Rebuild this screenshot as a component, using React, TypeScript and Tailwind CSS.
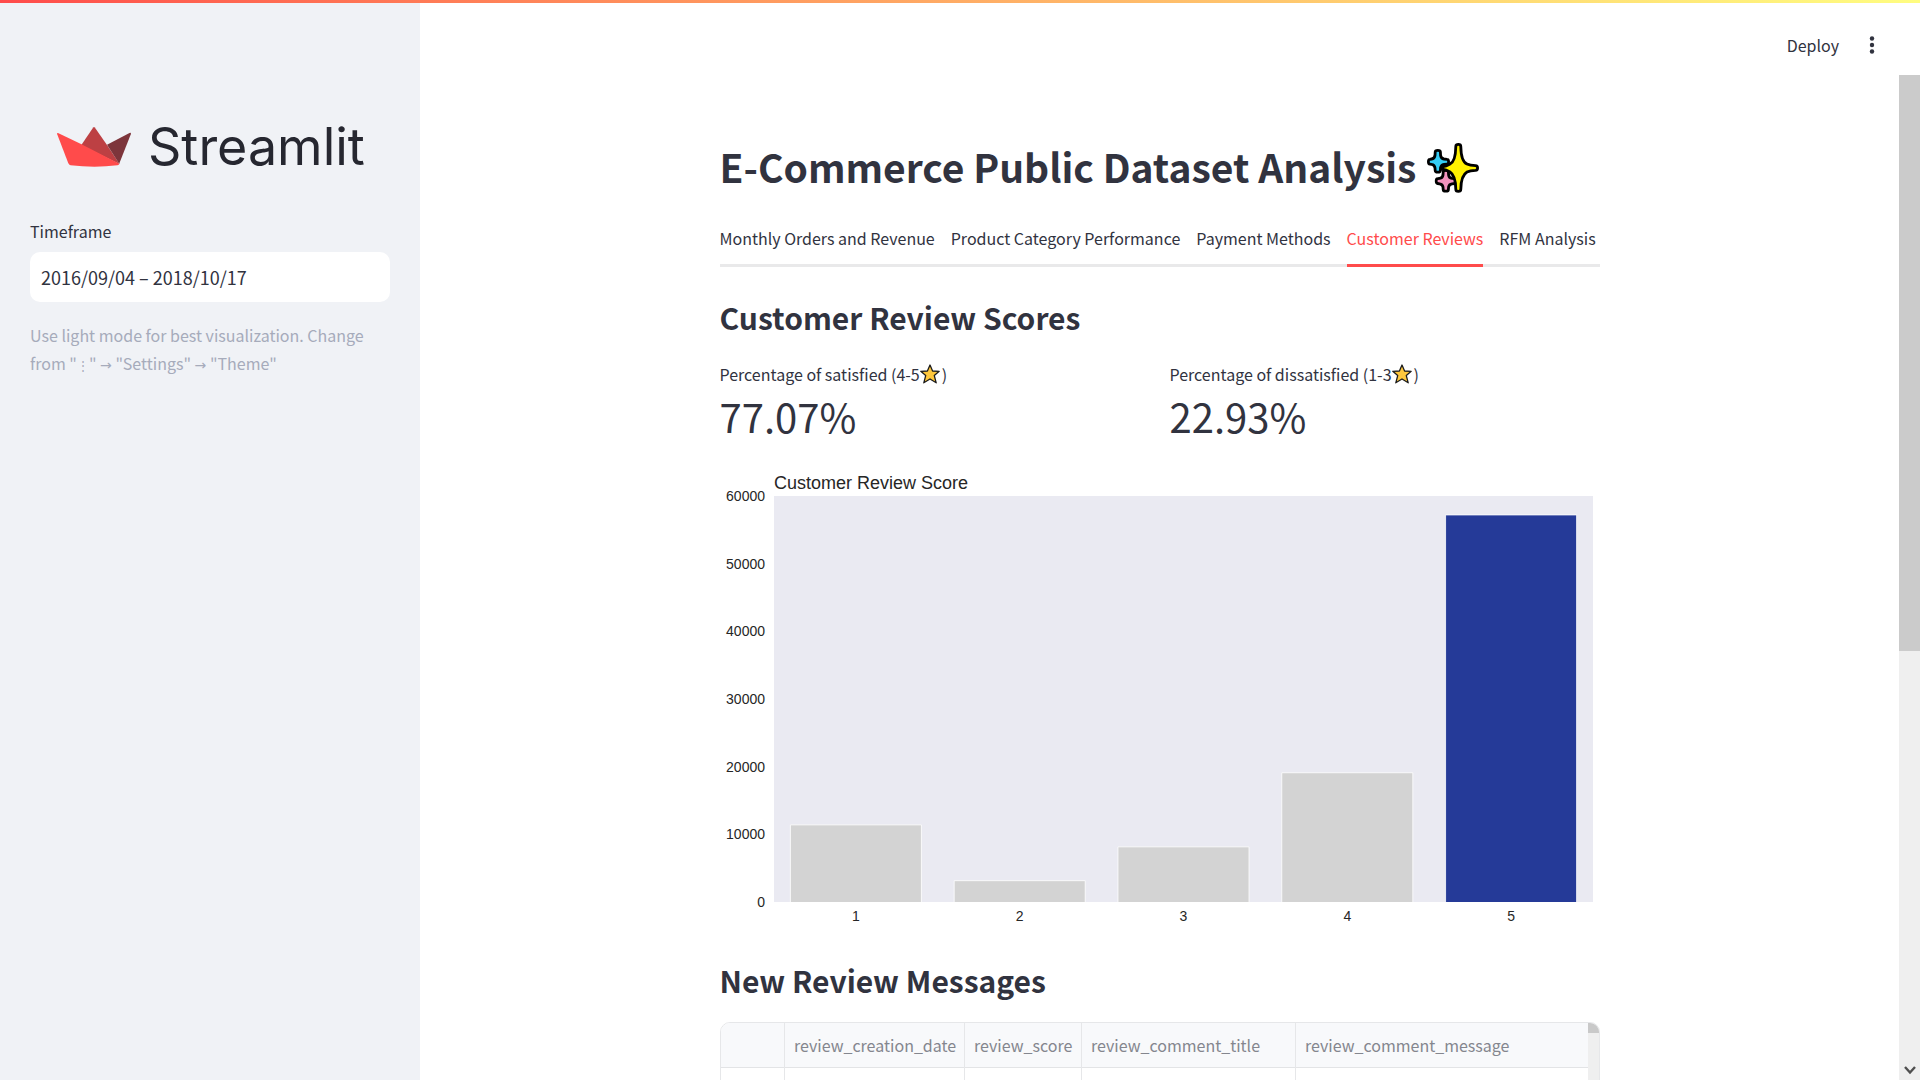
import React from "react";

const tabs = [
  "Monthly Orders and Revenue",
  "Product Category Performance",
  "Payment Methods",
  "Customer Reviews",
  "RFM Analysis",
];

const scores = [
  { score: 1, count: 11400 },
  { score: 2, count: 3150 },
  { score: 3, count: 8150 },
  { score: 4, count: 19100 },
  { score: 5, count: 57200 },
];

const ticks = [0, 10000, 20000, 30000, 40000, 50000, 60000];

function StreamlitMark() {
  return (
    <svg viewBox="0 0 76 42" className="h-[42px] w-[76px]" aria-hidden="true">
      <path d="M25 19.5 L37.2 1.6 Q38 .6 38.8 1.6 L51 19 L63.5 38 Z" fill="#bd4043" />
      <path d="M51 18.8 L73.5 7 Q75.5 6.3 74.8 8.2 L63.2 37.8 Z" fill="#7d353b" />
      <path d="M2 7 Q.6 6.6 1.2 8.3 L12.2 37 Q12.9 38.7 14.5 39.2 Q38 42 61.5 39.3 Q63 39 63.4 37.8 L25.5 18.2 Z" fill="#ff4b4b" />
    </svg>
  );
}

function Sparkles() {
  return (
    <svg viewBox="0 0 52 50" className="mt-1 h-[50px] w-[52px]" role="img" aria-label="sparkles">
      <g stroke="#000" strokeWidth="2.8" strokeLinejoin="round">
        <path d="M8.2 9 Q8.2 7.400 10.800 7.400 Q13.400 7.400 13.400 9 L13.600 12.500 Q14 15.600 17 16 L20 16.300 Q21.600 16.400 21.600 18.700 Q21.600 21 20 21.100 L17 21.400 Q14 21.800 13.600 25 L13.400 27.500 Q13.400 29.200 10.800 29.200 Q8.200 29.200 8.200 27.500 L8 25 Q7.600 21.800 4.600 21.400 L2.800 21.100 Q1.400 21 1.400 18.700 Q1.400 16.400 2.800 16.300 L4.600 16 Q7.600 15.600 8 12.500 Z" fill="#35cdf5" />
        <path d="M16.200 29 Q16.200 27.400 18.800 27.400 Q21.400 27.400 21.400 29 L21.600 32 Q22 35 25 35.400 L28 35.700 Q29.600 35.800 29.600 38.100 Q29.600 40.400 28 40.500 L25 40.800 Q22 41.200 21.600 44 L21.400 46.400 Q21.400 48.200 18.800 48.200 Q16.200 48.200 16.200 46.400 L16 44 Q15.600 41.200 12.600 40.800 L10.600 40.500 Q9.200 40.400 9.200 38.100 Q9.200 35.800 10.600 35.700 L12.600 35.400 Q15.600 35 16 32 Z" fill="#f292bd" />
        <path d="M28.8 3.4 Q28.8 1.4 31.3 1.4 Q33.8 1.4 33.8 3.4 Q34 18.200 40 21 Q43 22.400 48.500 22.600 Q50.600 22.800 50.600 25 Q50.600 27.200 48.500 27.400 Q43 27.600 40 29 Q34 32.500 33.800 46.200 Q33.800 48.400 31.300 48.400 Q28.800 48.400 28.800 46.200 Q28.600 32.500 23 29 Q19.500 26.800 14.500 26 Q13.500 25 14.500 24 Q19.500 23.200 23 21 Q28.600 18.200 28.800 3.400 Z" fill="#fff100" />
      </g>
    </svg>
  );
}

function Star() {
  return (
    <svg viewBox="0 0 20 20" className="mr-[2px] h-5 w-5" role="img" aria-label="star">
      <path d="M10 1 L12.6 7 L19.2 7.3 L14.3 11.6 L16.2 18.8 L10 15 L3.8 18.8 L5.7 11.6 L.8 7.3 L7.4 7 Z" fill="#ffc83d" stroke="#1c1c1c" strokeWidth="1.3" strokeLinejoin="round" />
    </svg>
  );
}

function ScoreChart() {
  const left = 54;
  const top = 26;
  const width = 819;
  const height = 406;
  const bottom = top + height;
  const slot = width / scores.length;
  return (
    <svg viewBox="0 0 880 460" className="w-full font-['Liberation_Sans',sans-serif]" fill="#262626" role="img" aria-label="Customer Review Score">
      <text x={left} y="19" fontSize="18">Customer Review Score</text>
      <rect x={left} y={top} width={width} height={height} fill="#eaeaf2" />
      {ticks.map((t) => (
        <text key={t} x="45" y={bottom - (t / 60000) * height + 5} fontSize="14" textAnchor="end">{t}</text>
      ))}
      {scores.map(({ score, count }, i) => {
        const h = (count / 60000) * height;
        const x = left + slot * i + slot * 0.1;
        return (
          <g key={score}>
            <path d={`M${x} ${bottom} v${-h} h${slot * 0.8} v${h}`} fill={score === 5 ? "#253a98" : "#d3d3d3"} stroke="#fff" strokeOpacity="0.8" />
            <text x={left + slot * (i + 0.5)} y="451" fontSize="14" textAnchor="middle">{score}</text>
          </g>
        );
      })}
    </svg>
  );
}

function Metric({ label, value }: { label: string; value: string }) {
  return (
    <div className="flex-1">
      <div className="flex h-7 items-center text-base">
        <span>{label}</span>
        <Star />
        <span>)</span>
      </div>
      <div className="text-[40px] leading-[56px]">{value}</div>
    </div>
  );
}

function Arrow() {
  return <span className="font-['DejaVu_Sans',sans-serif] text-sm leading-5">→</span>;
}

export default function App() {
  return (
    <div className="flex h-screen flex-col overflow-hidden bg-white font-['Noto_Sans_CJK_SC',sans-serif] text-[#31333f]">
      <div className="flex min-h-0 flex-1">
        <aside className="w-[420px] shrink-0 bg-[#f0f2f6] px-[30px] pt-[115px]">
          <div className="flex h-[64px] items-center gap-[16px] pl-[26px]">
            <StreamlitMark />
            <span className="font-['Inter',sans-serif] text-[52px] leading-[66px] text-[#262730]">Streamlit</span>
          </div>
          <label htmlFor="timeframe" className="mt-[37px] block text-base leading-[30px]">Timeframe</label>
          <input id="timeframe" type="text" defaultValue="2016/09/04 – 2018/10/17" className="mt-[6px] block h-[50px] w-full rounded-[10px] bg-white px-[11px] text-lg outline-none" />
          <p className="mt-[19px] text-base leading-7 text-[#a6abbb]">
            Use light mode for best visualization. Change from "<span className="text-xs leading-5">⋮</span>" <Arrow /> "Settings" <Arrow /> "Theme"
          </p>
        </aside>

        <div className="flex min-w-0 flex-1 flex-col">
          <header className="flex h-[75px] shrink-0 items-center justify-end gap-[28px] pt-[15px] pr-[43px]">
            <button type="button" className="text-base leading-6">Deploy</button>
            <button type="button" aria-label="Main menu" className="px-[3px]">
              <svg viewBox="0 0 4 18" className="h-[18px] w-1 overflow-visible" fill="#31333f">
                <circle cx="2" cy="2.5" r="2.2" />
                <circle cx="2" cy="9" r="2.2" />
                <circle cx="2" cy="15.5" r="2.2" />
              </svg>
            </button>
          </header>

          <div className="flex min-h-0 flex-1">
            <main className="min-w-0 flex-1 overflow-hidden">
              <div className="mx-auto max-w-[920px] px-5 pt-[58px]">
                <h1 className="flex items-center gap-[11px] text-[39px] leading-[66px] font-semibold">
                  E-Commerce Public Dataset Analysis
                  <Sparkles />
                </h1>
                <nav role="tablist" className="mt-[15px] flex gap-4 border-b-3 border-[#e9e9ea] whitespace-nowrap">
                  {tabs.map((t) => (
                    <button
                      key={t}
                      type="button"
                      role="tab"
                      aria-selected={t === "Customer Reviews"}
                      className={
                        t === "Customer Reviews"
                          ? "-mb-[3px] h-[53px] border-b-3 border-[#ff4b4b] pb-[2px] text-base text-[#ff4b4b]"
                          : "-mb-[3px] h-[53px] border-b-3 border-transparent pb-[2px] text-base"
                      }
                    >
                      {t}
                    </button>
                  ))}
                </nav>
                <h2 className="mt-[28px] text-[30px] leading-[44px] font-semibold">Customer Review Scores</h2>
                <div className="mt-[21px] flex gap-5">
                  <Metric label="Percentage of satisfied (4-5" value="77.07%" />
                  <Metric label="Percentage of dissatisfied (1-3" value="22.93%" />
                </div>
                <div className="mt-[26px]">
                  <ScoreChart />
                </div>
                <h2 className="mt-[28px] text-[30px] leading-[44px] font-semibold">New Review Messages</h2>
                <div className="mt-5 flex h-[500px] overflow-hidden rounded-t-[10px] border border-[#e6e7e9]">
                  <div className="min-w-0 flex-1">
                    <table className="h-[80px] w-full table-fixed border-collapse text-left text-base whitespace-nowrap text-[#84868e]">
                      <thead>
                        <tr className="h-[44px] border-b border-[#e3e4e6] bg-[#f8f9fb] leading-6">
                          <th className="w-[64px] border-r border-[#e6e7e9]" aria-label="index"></th>
                          <th className="w-[180px] border-r border-[#e6e7e9] pl-[9px] font-normal">review_creation_date</th>
                          <th className="w-[117px] border-r border-[#e6e7e9] pl-[9px] font-normal">review_score</th>
                          <th className="w-[214px] border-r border-[#e6e7e9] pl-[9px] font-normal">review_comment_title</th>
                          <th className="pl-[9px] font-normal">review_comment_message</th>
                        </tr>
                      </thead>
                      <tbody>
                        <tr className="h-9">
                          <td className="border-r border-[#e6e7e9]"></td>
                          <td className="border-r border-[#e6e7e9]"></td>
                          <td className="border-r border-[#e6e7e9]"></td>
                          <td className="border-r border-[#e6e7e9]"></td>
                          <td></td>
                        </tr>
                      </tbody>
                    </table>
                  </div>
                  <div className="w-[11px] bg-[#efefef]">
                    <div className="h-[10px] bg-[#c9c9c9]"></div>
                  </div>
                </div>
              </div>
            </main>
            <div className="flex w-[21px] shrink-0 flex-col items-center justify-between bg-[#efefef]">
              <div className="h-[576px] w-full bg-[#cbcbcb]"></div>
              <svg viewBox="0 0 12 10" className="mb-[5px] h-[10px] w-3">
                <path d="M1 2 L6 7.5 L11 2" fill="none" stroke="#505050" strokeWidth="2.4" />
              </svg>
            </div>
          </div>
        </div>
      </div>
      <div className="fixed inset-x-0 top-0 h-[3px] bg-linear-to-r from-[#ff4b4b] to-[#fffd80]"></div>
    </div>
  );
}
